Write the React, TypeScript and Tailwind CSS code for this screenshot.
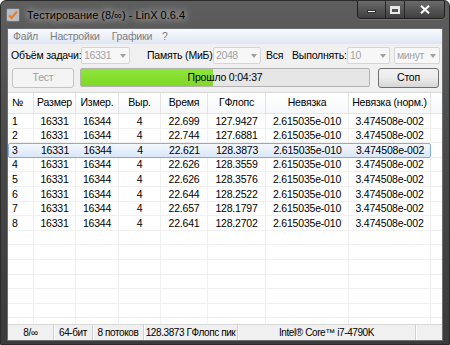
const rows = [
  { n: 1, t: "22.699", g: "127.9427" },
  { n: 2, t: "22.744", g: "127.6881" },
  { n: 3, t: "22.621", g: "128.3873" },
  { n: 4, t: "22.626", g: "128.3559" },
  { n: 5, t: "22.626", g: "128.3576" },
  { n: 6, t: "22.644", g: "128.2522" },
  { n: 7, t: "22.657", g: "128.1797" },
  { n: 8, t: "22.641", g: "128.2702" },
];

const cols = [
  { title: "№", w: "w-[26px]", left: true },
  { title: "Размер", w: "w-[42px]" },
  { title: "Измер.", w: "w-[43px]" },
  { title: "Выр.", w: "w-[42px]" },
  { title: "Время", w: "w-[47px]" },
  { title: "ГФлопс", w: "w-[58px]" },
  { title: "Невязка", w: "w-[83px]" },
  { title: "Невязка (норм.)", w: "w-[82px]" },
];

const Arrow = () => (
  <svg width="6" height="4" viewBox="0 0 6 4" className="shrink-0">
    <path d="M0 0h6L3 4z" fill="#a0a0a0" />
  </svg>
);

const Combo = ({ value, w }: { value: string; w: string }) => (
  <div
    className={`${w} h-[17px] shrink-0 flex items-center justify-between pl-[2px] pr-[3px] bg-[#f7f7f7] border border-[#d5d5d5] rounded-[2px] text-[#a3a3a3]`}
  >
    <span className="whitespace-nowrap tracking-[-0.4px]">{value}</span>
    <Arrow />
  </div>
);

function TitleBar() {
  return (
    <div className="h-[27px] flex justify-between pl-[5px] pr-[4px]">
      <div className="flex items-center gap-[7px] pt-[1px]">
        <svg width="14" height="14" viewBox="0 0 14 14">
          <rect x="0.5" y="0.5" width="13" height="13" rx="1.5" fill="#b9bec4" stroke="#6d7278" />
          <path d="M3 7.2l2.6 2.8L11 3.5" fill="none" stroke="#f07d14" strokeWidth="2" />
        </svg>
        <span className="text-[11px] tracking-normal text-black whitespace-nowrap [text-shadow:0_0_6px_#d8d8d8,0_0_10px_#bdbdbd]">
          Тестирование (8/∞) - LinX 0.6.4
        </span>
      </div>
      <div className="self-start flex h-[18px] rounded-b-[4px] border border-t-0 border-[#1e1e1e] overflow-hidden shadow-[0_1px_0_#777]">
        <div className="w-[28px] flex items-end justify-center pb-[5px] bg-gradient-to-b from-[#6b6b6b] to-[#404040] border-r border-[#262626]">
          <div className="w-[9px] h-[3px] bg-white border border-[#333]" />
        </div>
        <div className="w-[19px] flex items-center justify-center bg-gradient-to-b from-[#6b6b6b] to-[#404040] border-r border-[#262626]">
          <div className="w-[10px] h-[8px] border-2 border-t-[3px] border-[#e8e8e8]" />
        </div>
        <div className="w-[39px] flex items-center justify-center bg-gradient-to-b from-[#6b6b6b] to-[#404040]">
          <svg width="10" height="9" viewBox="0 0 10 9">
            <path d="M1 0.8l8 7.4M9 0.8L1 8.2" stroke="#fff" strokeWidth="2.2" />
          </svg>
        </div>
      </div>
    </div>
  );
}

function Table() {
  const empty = Array.from({ length: 8 });
  return (
    <div className="h-[232px] bg-white border-t border-[#d9d9d9] overflow-hidden text-black">
      <div className="flex h-[21px] border-b border-[#e5e5e5] bg-gradient-to-b from-white to-[#f7f8fa]">
        {cols.map((c) => (
          <div
            key={c.title}
            className={`${c.w} shrink-0 flex items-center whitespace-nowrap border-r border-[#e3e3e3] ${c.left ? "pl-[4px]" : "justify-center"}`}
          >
            {c.title}
          </div>
        ))}
        <div className="flex-1" />
      </div>
      {rows.map((r) => {
        const sel = r.n === 3;
        const vals = [String(r.n), "16331", "16344", "4", r.t, r.g, "2.615035e-010", "3.474508e-002"];
        return (
          <div key={r.n} className="flex h-[14.6px]">
            <div
              className={`flex w-[423px] ${sel ? "border border-[#84acdd] rounded-[2px] bg-gradient-to-b from-[#f3f8fe] to-[#d9e7f8]" : "border-b border-[#f0f0f0]"}`}
            >
              {cols.map((c, i) => (
                <div
                  key={c.title}
                  className={`${c.w} shrink-0 flex items-center leading-none whitespace-nowrap ${sel ? (i === 0 ? "-ml-[1px]" : "") : "border-r border-[#f0f0f0]"} ${c.left ? "pl-[4px]" : "justify-center"}`}
                >
                  {vals[i]}
                </div>
              ))}
            </div>
            <div className="flex-1 border-b border-[#f0f0f0]" />
          </div>
        );
      })}
      {empty.map((_, k) => (
        <div key={k} className="flex h-[14.6px] border-b border-[#f0f0f0]">
          {cols.map((c) => (
            <div key={c.title} className={`${c.w} shrink-0 border-r border-[#f0f0f0]`} />
          ))}
        </div>
      ))}
    </div>
  );
}

function StatusBar() {
  const parts = [
    { t: "8/∞", w: "w-[46px]" },
    { t: "64-бит", w: "w-[39px]" },
    { t: "8 потоков", w: "w-[51px]" },
    { t: "128.3873 ГФлопс пик", w: "w-[94px]" },
    { t: "Intel® Core™ i7-4790K", w: "w-[178px]" },
    { t: "", w: "flex-1" },
  ];
  return (
    <div className="h-[16px] flex bg-[#f0f0f0] border-t border-[#d7d7d7] text-[10px] tracking-[-0.4px]">
      {parts.map((p, i) => (
        <div
          key={i}
          className={`${p.w} shrink-0 flex items-center justify-center whitespace-nowrap overflow-hidden ${i < parts.length - 1 ? "border-r border-[#cfcfcf] shadow-[1px_0_0_#fff]" : ""}`}
        >
          {p.t}
        </div>
      ))}
    </div>
  );
}

export default function App() {
  return (
    <div className="w-[450px] h-[345px] bg-white font-['Liberation_Sans',Arial,sans-serif] text-[10.5px] tracking-[-0.2px] text-black">
      <div className="w-[450px] h-[345px] rounded-t-[6px] border border-[#2a2a2a] bg-gradient-to-b from-[#5e5e5e] via-[#474747] to-[#3b3b3b] flex flex-col">
        <TitleBar />
        <div className="mx-[6px] h-[313px] flex flex-col bg-[#f0f0f0] border border-[#6e6e6e]">
          <div className="h-[15px] flex items-center gap-[12px] pl-[5px] bg-gradient-to-b from-[#f8fafd] to-[#dfe7f4] text-[#7d7d7d]">
            <span>Файл</span>
            <span>Настройки</span>
            <span>Графики</span>
            <span className="ml-[-2px]">?</span>
          </div>
          <div className="h-[25px] flex items-center pl-[3px]">
            <span className="w-[70px] shrink-0 whitespace-nowrap">Объём задачи:</span>
            <Combo value="16331" w="w-[49px]" />
            <span className="ml-[17px] w-[66px] shrink-0 whitespace-nowrap">Память (МиБ):</span>
            <Combo value="2048" w="w-[48px]" />
            <span className="ml-[5px] w-[26px] shrink-0">Вся</span>
            <span className="w-[55px] shrink-0 whitespace-nowrap">Выполнять:</span>
            <Combo value="10" w="w-[43px]" />
            <div className="ml-[4px]">
              <Combo value="минут" w="w-[46px]" />
            </div>
          </div>
          <div className="h-[22px] flex items-center pl-[4px]">
            <div className="w-[62px] h-[20px] flex items-center justify-center rounded-[3px] border border-[#c4c4c4] bg-[#f4f4f4] text-[#a0a0a0]">
              Тест
            </div>
            <div className="ml-[6px] w-[290px] h-[19px] relative rounded-[2px] border border-[#b2b2b2] bg-[#e6e6e6] overflow-hidden">
              <div className="h-full w-[46%] bg-gradient-to-b from-[#8de53a] to-[#7fd924]" />
              <div className="absolute inset-0 flex items-center justify-center">Прошло 0:04:37</div>
            </div>
            <div className="ml-[8px] w-[61px] h-[20px] flex items-center justify-center rounded-[3px] border border-[#707070] bg-gradient-to-b from-[#f2f2f2] via-[#ebebeb] to-[#d6d6d6]">
              Стоп
            </div>
          </div>
          <div className="mt-[4px]">
            <Table />
          </div>
          <StatusBar />
        </div>
      </div>
    </div>
  );
}
